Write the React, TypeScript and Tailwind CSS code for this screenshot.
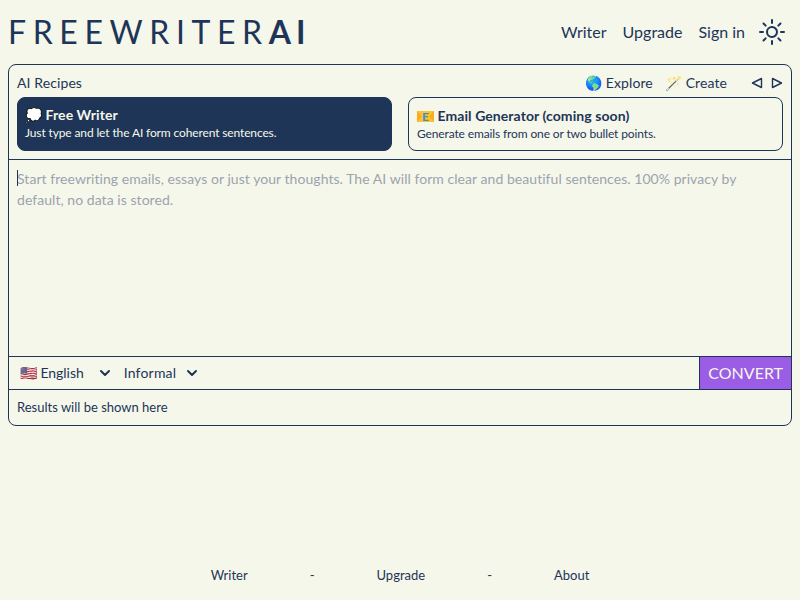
import { ChevronDown } from "lucide-react";

function MailIcon() {
  return (
    <svg className="inline-block h-[13px] w-[17px] align-[-2px]" viewBox="0 0 17 13">
      <rect x="0" y="1" width="17" height="11" fill="#fdc32f" />
      <path d="M0 1l5 5.5L0 12zM17 1l-5 5.5 5 5.5z" fill="#f7ad1e" />
      <text x="8.5" y="11" textAnchor="middle" fontSize="12" fontWeight="700" fill="#3f8fd8">
        E
      </text>
    </svg>
  );
}

function RecipeCard({ active, icon, title, text }: { active?: boolean; icon: React.ReactNode; title: string; text: string }) {
  return (
    <div
      className={
        active
          ? "flex-1 h-[54px] rounded-lg border border-[#1e3557] bg-[#1e3557] pt-[7px] pr-[9px] pl-[7px] text-[#f5f7eb]"
          : "flex-1 h-[54px] rounded-lg border border-[#1e3557] px-2 pt-2 text-[#1e3557]"
      }
    >
      <div className="text-sm leading-5 font-bold tracking-[0.08px]">
        {icon} {title}
      </div>
      <div className="text-xs leading-4 tracking-[-0.13px]">{text}</div>
    </div>
  );
}

export default function App() {
  return (
    <div className="flex h-[600px] flex-col bg-[#f5f7eb] font-['Lato',sans-serif] text-[#1e3557]">
      <header className="flex h-16 items-center justify-between pr-3 pl-2">
        <div className="text-[32px] leading-10 tracking-[6.6px]">
          FREEWRITER<span className="font-bold tracking-[5px]">AI</span>
        </div>
        <nav className="flex items-center gap-4 text-base">
          <span>Writer</span>
          <span>Upgrade</span>
          <span>Sign in</span>
          <svg className="-ml-[5px] h-8 w-8" viewBox="0 0 24 24" fill="none" stroke="currentColor" strokeWidth="1.5" strokeLinecap="round" strokeLinejoin="round">
            <path d="M12 3v2.25m6.364.386l-1.591 1.591M21 12h-2.25m-.386 6.364l-1.591-1.591M12 18.75V21m-4.773-4.227l-1.591 1.591M5.25 12H3m4.227-4.773L5.636 5.636M15.75 12a3.75 3.75 0 11-7.5 0 3.75 3.75 0 017.5 0z" />
          </svg>
        </nav>
      </header>

      <main className="mx-2 h-[362px] rounded-lg border border-[#1e3557]">
        <section className="px-2 pt-2">
          <div className="flex h-5 items-center justify-between text-sm tracking-[0.1px]">
            <span>AI Recipes</span>
            <div className="flex items-center">
              <span>🌎 Explore</span>
              <span className="ml-3">🪄 Create</span>
              <svg className="ml-6 h-3 w-3" viewBox="0 0 12 12" fill="none" stroke="currentColor" strokeWidth="1.4" strokeLinejoin="round">
                <path d="M10.5 1.5v9L1.5 6z" />
              </svg>
              <svg className="ml-2 h-3 w-3" viewBox="0 0 12 12" fill="none" stroke="currentColor" strokeWidth="1.4" strokeLinejoin="round">
                <path d="M1.5 1.5v9l9-4.5z" />
              </svg>
            </div>
          </div>
          <div className="mt-1 flex gap-4 pb-2">
            <RecipeCard active icon="💭" title="Free Writer" text="Just type and let the AI form coherent sentences." />
            <RecipeCard icon={<MailIcon />} title="Email Generator (coming soon)" text="Generate emails from one or two bullet points." />
          </div>
        </section>

        <div className="relative">
          <textarea
            className="block h-[198px] w-full resize-none border-y border-[#1e3557] bg-transparent py-2 pr-10 pl-2 text-sm leading-[21px] tracking-[0.05px] outline-none placeholder:text-[#9ca3af]"
            placeholder="Start freewriting emails, essays or just your thoughts. The AI will form clear and beautiful sentences. 100% privacy by default, no data is stored."
          />
          <span className="absolute top-[11px] left-2 h-4 w-px bg-[#1e3557]" />
        </div>

        <div className="flex h-[33px] items-center justify-between border-b border-[#1e3557] text-sm">
          <div className="flex items-center pl-[11px]">
            <span className="tracking-[-0.05px]">🇺🇸 English</span>
            <ChevronDown className="ml-[13px] h-4 w-4" strokeWidth={3} />
            <span className="ml-[11px] tracking-[0.2px]">Informal</span>
            <ChevronDown className="ml-2 h-4 w-4" strokeWidth={3} />
          </div>
          <button className="h-full border-l border-[#1e3557] bg-[#9b5de5] px-2 text-base text-[#f5f7eb]">CONVERT</button>
        </div>

        <div className="px-2 pt-[7px] text-[13px] leading-5">Results will be shown here</div>
      </main>

      <footer className="mt-auto flex h-12 items-center justify-center gap-[62px] text-[13px]">
        <span>Writer</span>
        <span>-</span>
        <span>Upgrade</span>
        <span>-</span>
        <span>About</span>
      </footer>
    </div>
  );
}
